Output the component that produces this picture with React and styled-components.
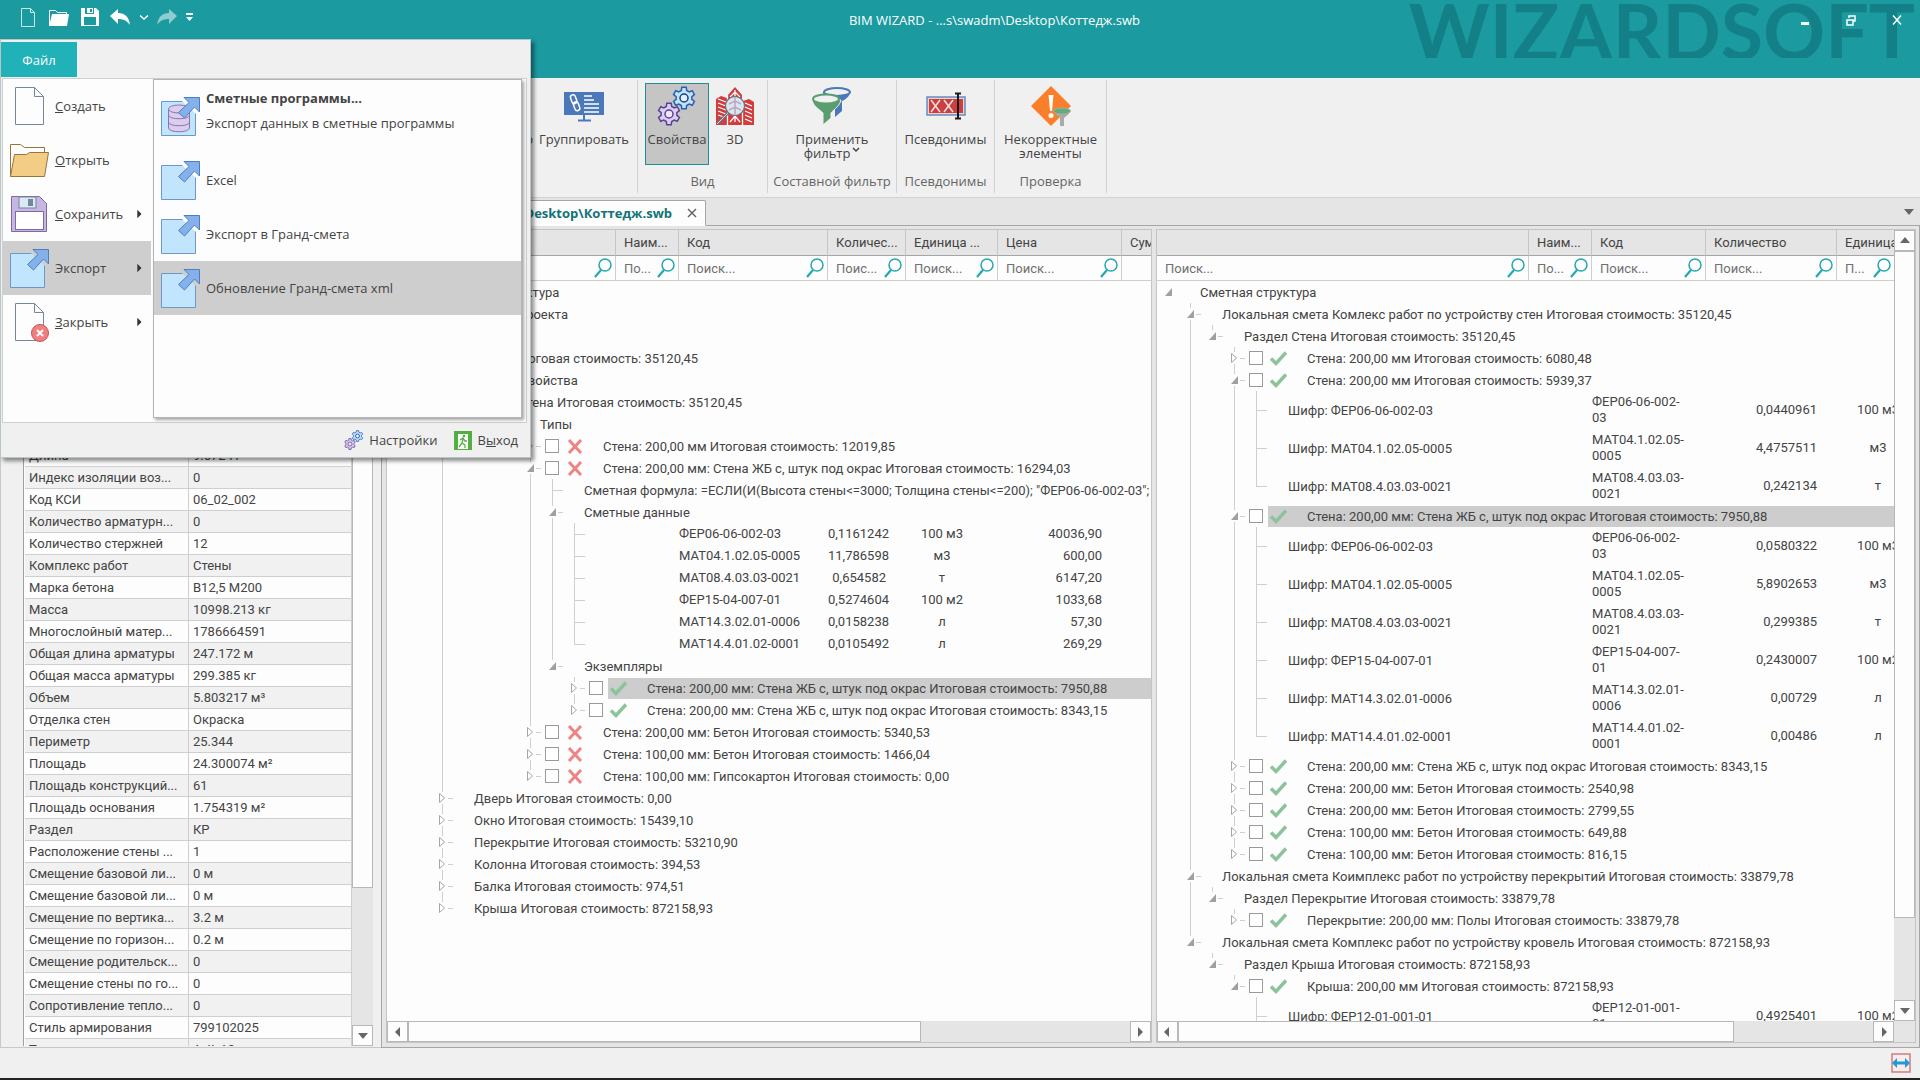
import React, { useState } from "react";
import styled, { createGlobalStyle, css } from "styled-components";

const GlobalStyle = createGlobalStyle`
  * {
    box-sizing: border-box;
  }

  body {
    margin: 0;
    background: #222;
    color: #444;
    font-family: "Open Sans", "Noto Sans", sans-serif;
    font-size: 13px;
  }

  button,
  input {
    font: inherit;
    color: inherit;
  }

  button {
    padding: 0;
    border: none;
    background: none;
    cursor: pointer;
  }

  svg {
    display: block;
    flex: none;
  }
`;

/* ---------- layout ---------- */

const Window = styled.div`
  position: relative;
  display: flex;
  flex-direction: column;
  height: 100vh;
  border-bottom: 2px solid #222;
  background: #f0f0f0;
  overflow: hidden;
`;

const Workspace = styled.div`
  display: flex;
  flex: 1;
  min-height: 0;
`;

const Documents = styled.main`
  display: flex;
  flex-direction: column;
  flex: 1;
  min-width: 0;
  background: #e5e5e5;
`;

const Panes = styled.div`
  display: flex;
  flex: 1;
  gap: 4px;
  min-height: 0;
  padding: 3px 3px 4px 4px;
  border: solid #a6a6a6;
  border-width: 0 1px 1px 1px;
`;

const StatusBar = styled.footer`
  display: flex;
  flex: none;
  align-items: center;
  justify-content: flex-end;
  height: 30px;
  padding-right: 9px;
  background: #f0f0f0;
`;

/* ---------- title bar ---------- */

const TitleBar = styled.header`
  position: relative;
  display: flex;
  flex: none;
  align-items: flex-start;
  height: 78px;
  background: #1b9aa0;
  color: #fff;
  overflow: hidden;
`;

const QuickAccess = styled.div`
  display: flex;
  align-items: center;
  width: 195px;
  height: 34px;
  padding-left: 18px;
`;

const QuickButton = styled.button`
  display: flex;
  align-items: center;
  justify-content: center;
  width: ${(props) => props.$width || 30}px;
  height: 24px;
  opacity: ${(props) => (props.$faded ? 0.5 : 1)};
`;

const Title = styled.h1`
  flex: 1;
  margin: 0;
  padding-left: 12px;
  font-size: 13px;
  font-weight: 400;
  line-height: 40px;
  text-align: center;
`;

const Brand = styled.div`
  position: absolute;
  top: 0;
  right: 5px;
  height: 58px;
  overflow: hidden;
  color: #138088;
  font-family: Lato, sans-serif;
  font-size: 77px;
  font-weight: 700;
  line-height: 60px;
`;

const WindowButtons = styled.div`
  position: relative;
  display: flex;
  width: 138px;
  height: 40px;
`;

const WindowButton = styled.button`
  display: flex;
  flex: 1;
  align-items: center;
  justify-content: center;
`;

/* ---------- ribbon ---------- */

const Ribbon = styled.nav`
  display: flex;
  flex: none;
  height: 120px;
  padding: 2px 0 4px;
  border-bottom: 1px solid #d2d2d2;
  background: #f0f0f0;
`;

const RibbonGroup = styled.section`
  display: flex;
  flex-direction: column;
  width: ${(props) => props.$width}px;
  border-right: 1px solid #d2d2d2;
`;

const RibbonButtons = styled.div`
  display: flex;
  flex: 1;
  justify-content: ${(props) => props.$align || "center"};
  padding: 3px 7px 0;
`;

const RibbonButton = styled.button`
  display: flex;
  flex: none;
  flex-direction: column;
  align-items: center;
  width: ${(props) => props.$width || 52}px;
  height: 82px;
  padding-top: 2px;
  border: 1px solid ${(props) => (props.$active ? "#1b8f95" : "transparent")};
  background: ${(props) => (props.$active ? "#c5c5c5" : "none")};
  line-height: 14px;
  white-space: nowrap;

  span {
    display: flex;
    align-items: center;
    gap: 2px;
  }

  svg:first-child {
    margin-bottom: 6px;
  }
`;

const RibbonCaption = styled.h2`
  height: 24px;
  margin: 0;
  color: #666;
  font-size: 13px;
  font-weight: 400;
  line-height: 24px;
  text-align: center;
  white-space: nowrap;
`;

/* ---------- application menu ---------- */

const AppMenu = styled.div`
  position: absolute;
  top: 39px;
  left: 0;
  z-index: 10;
  width: 531px;
  border: 1px solid #b9c6c7;
  background: #f0f0f0;
  box-shadow: 3px 3px 4px rgba(0, 0, 0, 0.45);
`;

const FileTab = styled.button`
  display: block;
  width: 76px;
  height: 35px;
  margin-top: 2px;
  background: #20b2b8;
  color: #fff;
`;

const MenuBody = styled.div`
  display: flex;
  margin: 1px 3px 0 1px;
  border: 1px solid #d0d0d0;
  background: #fdfdfd;
`;

const MenuList = styled.ul`
  width: 150px;
  height: 343px;
  margin: 0;
  padding: 0 2px 0 0;
  list-style: none;
`;

const Submenu = styled.ul`
  flex: 1;
  height: 339px;
  margin: 0 4px 0 0;
  padding: 0;
  border: 1px solid #b4b4b4;
  background: #fdfdfd;
  box-shadow: 2px 2px 3px rgba(0, 0, 0, 0.35);
  list-style: none;
`;

const MenuItem = styled.button`
  display: flex;
  align-items: center;
  gap: 5px;
  width: 100%;
  height: ${(props) => (props.$tall ? 73 : 54)}px;
  padding: 0 7px 0 6px;
  background: ${(props) => (props.$active ? "#cecece" : "none")};
  text-align: left;

  b,
  small {
    display: block;
    font-size: 13px;
    line-height: 25px;
  }
`;

const MenuText = styled.span`
  flex: 1;
  padding-bottom: ${(props) => (props.$raised ? 12 : 0)}px;
`;

const MenuFooter = styled.div`
  display: flex;
  justify-content: flex-end;
  gap: 17px;
  height: 34px;
  padding-right: 12px;
`;

const FooterButton = styled.button`
  display: flex;
  align-items: center;
  gap: 5px;
`;

/* ---------- properties ---------- */

const PropertiesPanel = styled.aside`
  display: flex;
  flex: none;
  width: 381px;
  padding: 1px 8px 1px 22px;
  border-left: 1px solid #c8c8c8;
  border-bottom: 1px solid #c8c8c8;
`;

const PropertiesScroll = styled.div`
  flex: 1;
  min-width: 0;
  padding-left: 1px;
  border-left: 1px solid #a0a0a0;
  background: #fdfdfd;
  overflow: hidden;
`;

const PropertiesTable = styled.table`
  width: 100%;
  border-collapse: separate;
  border-spacing: 0;
  table-layout: fixed;
  font-family: Roboto, sans-serif;

  caption {
    height: 26px;
    text-align: left;
  }

  tr {
    background: #fdfdfd;
  }

  tr:nth-child(even) {
    background: #f1f1f1;
  }

  th,
  td {
    height: 22px;
    padding: 0 4px;
    border-right: 1px solid #cfcfcf;
    border-bottom: 1px solid #cfcfcf;
    overflow: hidden;
    font-weight: 400;
    text-align: left;
    text-overflow: ellipsis;
    white-space: nowrap;
  }

  th {
    width: 164px;
  }
`;

/* ---------- tabs ---------- */

const TabStrip = styled.div`
  display: flex;
  flex: none;
  align-items: flex-end;
  justify-content: space-between;
  height: 28px;
  border-bottom: 1px solid #a6a6a6;
`;

const DocumentTab = styled.div`
  display: flex;
  align-items: center;
  justify-content: flex-end;
  gap: 15px;
  width: 325px;
  height: 26px;
  margin-bottom: -1px;
  padding-right: 8px;
  border: 1px solid #a6a6a6;
  border-bottom-color: #fdfdfd;
  border-radius: 2px 2px 0 0;
  background: #fdfdfd;
  color: #127378;
  font-weight: 700;
`;

const TabList = styled.button`
  width: 22px;
  height: 26px;
  display: flex;
  align-items: center;
  justify-content: center;
`;

/* ---------- tree grid ---------- */

const Pane = styled.section`
  display: flex;
  flex: ${(props) => props.$grow} 1 0;
  min-width: 0;
  border: 1px solid #c4c4c4;
  background: #fdfdfd;
`;

const PaneMain = styled.div`
  display: flex;
  flex: 1;
  flex-direction: column;
  min-width: 0;
`;

const PaneScroll = styled.div`
  flex: 1;
  min-height: 0;
  overflow: hidden;
`;

const GridTable = styled.table`
  width: 100%;
  border-collapse: separate;
  border-spacing: 0;
  table-layout: fixed;
  font-family: Roboto, sans-serif;
`;

const HeadCell = styled.th`
  height: 26px;
  padding: 0 0 0 8px;
  border-right: 1px solid #c6c6c6;
  border-bottom: 1px solid #a6a6a6;
  background: #e5e5e5;
  overflow: hidden;
  font-weight: 400;
  text-align: left;
  text-overflow: clip;
  white-space: nowrap;

  &:last-child {
    border-right: none;
  }
`;

const SearchCell = styled.td`
  height: 25px;
  padding: 0 3px 0 8px;
  border-right: 1px solid #cfcfcf;
  border-bottom: 1px solid #cfcfcf;

  &:last-child {
    border-right: none;
  }
`;

const SearchBox = styled.label`
  display: flex;
  align-items: center;
  gap: 4px;
`;

const SearchInput = styled.input`
  flex: 1;
  min-width: 0;
  width: 0;
  padding: 0;
  border: none;
  outline: none;
  background: none;
  text-overflow: ellipsis;

  &::placeholder {
    color: #707070;
    opacity: 1;
  }
`;

const TreeCell = styled.td`
  padding: 0;
  white-space: nowrap;
`;

const TreeLine = styled.div`
  display: flex;
  align-items: stretch;
  height: ${(props) => (props.$tall ? 38 : 22)}px;
`;

const vertical = css`
  background-image: linear-gradient(#cfcfcf, #cfcfcf);
  background-repeat: no-repeat;
  background-position: 11px 0;
`;

const Guide = styled.span`
  flex: none;
  width: 22px;
  ${(props) => props.$on && vertical}
  background-size: 1px 100%;
`;

const Joint = styled.span`
  display: flex;
  flex: none;
  align-items: center;
  width: 22px;
  ${(props) => !props.$root && vertical}
  background-size: 1px ${(props) => (props.$last ? "50%" : "100%")};

  &::after {
    content: "";
    flex: 1;
    height: 1px;
    margin-left: ${(props) => (props.$leaf ? 11 : 0)}px;
    background: ${(props) => (props.$root ? "none" : "#cfcfcf")};
  }
`;

const Expander = styled.button`
  display: flex;
  align-items: center;
  justify-content: center;
  width: 9px;
  height: 12px;
  margin: 0 1px 0 7px;
  background: #fdfdfd;
`;

const Tick = styled.input`
  appearance: none;
  align-self: center;
  flex: none;
  width: 14px;
  height: 14px;
  margin: 0 5px 0 4px;
  border: 1px solid #9a9a9a;
  background: #fff;
`;

const Label = styled.span`
  display: flex;
  flex: 1;
  align-items: center;
  margin-top: 1px;
  padding-left: ${(props) => (props.$marked ? 2 : 21)}px;
  background: ${(props) => (props.$selected ? "#cdcdcd" : "none")};
  line-height: 20px;

  svg {
    margin-right: 20px;
  }
`;

const DataCell = styled.td`
  padding: 0 20px 0 0;
  line-height: 16px;
  text-align: ${(props) => props.$align || "left"};
  white-space: ${(props) => (props.$wrap ? "normal" : "nowrap")};
`;

const Unit = styled.div`
  width: ${(props) => props.$width}px;
  text-align: center;
`;

/* ---------- scroll bars ---------- */

const ScrollColumn = styled.div`
  display: flex;
  flex: none;
  flex-direction: column;
  width: 21px;
  background: #e5e5e5;
`;

const ScrollRow = styled.div`
  display: flex;
  flex: none;
  height: 21px;
  background: #e5e5e5;
`;

const ScrollButton = styled.button`
  display: flex;
  flex: none;
  align-items: center;
  justify-content: center;
  width: 21px;
  height: 21px;
  border: 1px solid #b8b8b8;
  background: #fdfdfd;
`;

const ScrollTrack = styled.div`
  display: flex;
  flex: 1;
  flex-direction: ${(props) => (props.$vertical ? "column" : "row")};
`;

const ScrollThumb = styled.div`
  flex: 0 0 ${(props) => props.$size}%;
  border: 1px solid #b8b8b8;
  background: #fdfdfd;
`;

/* ---------- icons ---------- */

const arrows = {
  up: "M1 8 L6 2 L11 8 Z",
  down: "M1 3 L11 3 L6 9 Z",
  left: "M8 1 L8 11 L3 6 Z",
  right: "M4 1 L4 11 L9 6 Z",
};

const Arrow = ({ to, size = 12, color = "#666" }) => (
  <svg width={size} height={size} viewBox="0 0 12 12">
    <path d={arrows[to]} fill={color} />
  </svg>
);

const gearPath = (cx, cy, outer, inner) => {
  const points = [];
  for (let i = 0; i < 6; i++) {
    [
      [-0.34, inner],
      [-0.2, outer],
      [0.2, outer],
      [0.34, inner],
    ].forEach(([offset, r]) => {
      const a = (i * Math.PI) / 3 + offset;
      points.push(
        `${(cx + r * Math.sin(a)).toFixed(2)} ${(cy - r * Math.cos(a)).toFixed(2)}`
      );
    });
  }
  return `M${points.join("L")}Z`;
};

const GearsIcon = ({ size = 40 }) => (
  <svg width={size} height={size} viewBox="0 0 40 40">
    <path d={gearPath(27, 12, 11, 8)} fill="#bfe3ff" stroke="#2a5fae" strokeWidth="1.5" />
    <circle cx="27" cy="12" r="4" fill="#dff0ff" stroke="#1f3f7c" strokeWidth="1.5" />
    <path d={gearPath(12, 28, 11, 8)} fill="#dccdf2" stroke="#5b4390" strokeWidth="1.5" />
    <circle cx="12" cy="28" r="4" fill="#eee6fa" stroke="#5b4390" strokeWidth="1.5" />
  </svg>
);

const GroupIcon = () => (
  <svg width="40" height="40" viewBox="0 0 40 40">
    <rect x="0" y="6" width="40" height="23" fill="#4a78b8" />
    <path d="M20 29v5M14 34.500h13" stroke="#4a78b8" strokeWidth="2" />
    <path d="M20 10h8M20 14h10M20 18h15M20 22h15M20 26h15" stroke="#fff" strokeWidth="1.5" />
    <g fill="none" stroke="#fff" strokeWidth="1.5">
      <rect x="7" y="9" width="5" height="9" rx="2.500" transform="rotate(-20 9 13)" />
      <rect x="10" y="16" width="5" height="9" rx="2.500" transform="rotate(-20 12 20)" />
    </g>
  </svg>
);

const BuildingIcon = () => (
  <svg width="40" height="40" viewBox="0 0 40 40">
    <path d="M13 39V9l7-8 7 8v30z" fill="#d23c3c" />
    <path d="M1 39V13l5-3 6 2v27zM39 39V16l-5-3-6 2v24z" fill="#d23c3c" />
    <path
      d="M20 4v32M15 11l5-5 5 5M12.500 9v30M27.500 12v27M15 36l5-6 5 6M3 13l8 3M3 17l8 3M3 21l8 3M3 25l8 3M3 29l6 2M30 17l7 3M30 21l7 3M30 25l7 3M30 29l7 3M30 33l7 3"
      fill="none"
      stroke="#fff"
      strokeWidth="1.300"
    />
    <path d="M13 27L2 38" stroke="#6d7480" strokeWidth="3" />
    <path d="M13 27L2 38" stroke="#c9d2dd" strokeWidth="1" />
    <circle cx="20" cy="20" r="9.500" fill="#dce6f2" stroke="#6d7480" strokeWidth="1.200" />
    <path d="M20 11v18M14 18l6-3 6 3M14 24l6-3 6 3" fill="none" stroke="#b9a9b9" strokeWidth="1.500" />
  </svg>
);

const FilterIcon = () => (
  <svg width="40" height="40" viewBox="0 0 40 40">
    <path d="M11 6c0 4 5 6 12 7v18l7-6V15c5-2 8-6 8-9z" fill="#4a78b8" />
    <ellipse cx="25" cy="6" rx="13" ry="4" fill="#f0f0f0" stroke="#4a78b8" strokeWidth="2" />
    <path d="M0 14c1 6 7 9 11 13v12l8-7v-5c3-4 9-7 10-13z" fill="#5a9e70" stroke="#f0f0f0" strokeWidth="1" />
    <ellipse cx="14" cy="13" rx="13" ry="4.500" fill="#f0f0f0" stroke="#5a9e70" strokeWidth="2" />
  </svg>
);

const AliasIcon = () => (
  <svg width="40" height="40" viewBox="0 0 40 40">
    <rect x="1" y="11" width="38" height="18" fill="#f3cfd0" stroke="#5f8fc4" strokeWidth="1.500" />
    <rect x="3" y="13" width="34" height="14" fill="#c84040" />
    <path d="M5 14l9 12M14 14L5 26M18 14l9 12M27 14l-9 12" stroke="#f8dede" strokeWidth="1.500" />
    <path d="M32 8v24M29 7.500h6M29 32.500h6" stroke="#1a1a1a" strokeWidth="2" />
  </svg>
);

const WarningIcon = () => (
  <svg width="40" height="40" viewBox="0 0 40 40">
    <path d="M20 0l20 20-20 20L0 20z" fill="#fb7f2a" />
    <path d="M17.500 9h5l-1.500 16h-2z" fill="#fff" />
    <circle cx="20" cy="29.500" r="2.500" fill="#fff" />
    <path d="M23 25c1 4 5 5 6 7v8h4v-8c2-2 5-3 6-7z" fill="#a9a9a9" />
    <ellipse cx="31" cy="25" rx="8.500" ry="3" fill="#5fae78" stroke="#a9a9a9" />
  </svg>
);

const PageIcon = ({ closed }) => (
  <svg width="41" height="41" viewBox="0 0 41 41">
    <path d="M6.500 1.500h19l9 9v28h-28z" fill="#fdfdfd" stroke="#75879a" />
    <path d="M25.500 1.500v9h9" fill="none" stroke="#75879a" />
    {closed && (
      <>
        <circle cx="31" cy="31" r="8.500" fill="#f08080" stroke="#c05656" />
        <path d="M28 28l6 6M34 28l-6 6" stroke="#fff" strokeWidth="2" />
      </>
    )}
  </svg>
);

const FolderIcon = () => (
  <svg width="41" height="41" viewBox="0 0 41 41">
    <path d="M1.500 36.500v-32h10l4 3h20v6" fill="#fdfdfd" stroke="#96763b" />
    <path d="M1.500 36.500l4-22h12l3-2h19l-4 24z" fill="#f3cd86" stroke="#96763b" />
  </svg>
);

const DiskIcon = () => (
  <svg width="41" height="41" viewBox="0 0 41 41">
    <path d="M2.500 2.500h28l7 7v28h-35z" fill="#c5b7e2" stroke="#7c6aa3" />
    <rect x="10" y="3" width="17" height="11" fill="#dce8f2" stroke="#75879a" />
    <rect x="19" y="5" width="5" height="7" fill="#75879a" />
    <rect x="6.500" y="17.500" width="28" height="18" fill="#fff" stroke="#7c6aa3" />
  </svg>
);

const ExportIcon = ({ database }) => (
  <svg width="41" height="41" viewBox="0 0 41 41">
    <path d="M22.500 5.500h-21v34h34v-22" fill="#c1e5fd" />
    <path d="M22.500 5.500h-21v34h34v-22" fill="none" stroke="#6c97c6" />
    {database && (
      <g fill="#dccdec" stroke="#8a76b0">
        <path d="M8.500 13v19c0 5 21 5 21 0V13" />
        <ellipse cx="19" cy="13" rx="10.500" ry="4" />
        <path d="M8.500 19c0 5 21 5 21 0M8.500 26c0 5 21 5 21 0" fill="none" />
      </g>
    )}
    <path d="M24 1.500h15.500V16l-5-5-10 11-6-5.500L29 6.500z" fill="#84b1ec" stroke="#4d7fc0" />
  </svg>
);

const ExitIcon = () => (
  <svg width="18" height="19" viewBox="0 0 18 19">
    <rect width="18" height="19" fill="#52b043" />
    <rect x="4" y="3" width="10" height="15" fill="#fff" />
    <circle cx="10" cy="5" r="1.300" fill="#52b043" />
    <path d="M6 9l3-2 2 3h2M9 8l-1 4 3 2v3M8 12l-3 4" fill="none" stroke="#52b043" strokeWidth="1.300" />
  </svg>
);

const SearchIcon = () => (
  <svg width="18" height="20" viewBox="0 0 18 20">
    <circle cx="11" cy="7" r="6" fill="none" stroke="#25a8ae" strokeWidth="1.500" />
    <path d="M7 12L1 19" stroke="#25a8ae" strokeWidth="2.200" />
  </svg>
);

const CheckIcon = () => (
  <svg width="17" height="16" viewBox="0 0 17 16">
    <path d="M1 7.500l5 5L16 1.500" fill="none" stroke="#8cc49a" strokeWidth="3.500" />
  </svg>
);

const CrossIcon = () => (
  <svg width="17" height="16" viewBox="0 0 17 16">
    <path d="M3 1l12 13M15 1L3 14" fill="none" stroke="#ee8585" strokeWidth="3" />
  </svg>
);

const FitIcon = () => (
  <svg width="20" height="20" viewBox="0 0 20 20">
    <rect x="1" y="1" width="18" height="18" fill="#f6ecec" stroke="#cf7d7d" strokeWidth="1.500" />
    <path d="M1 10l5-5v3.500h8V5l5 5-5 5v-3.500H6V15z" fill="#1f9ad6" />
  </svg>
);

/* ---------- data ---------- */

const properties = [
  ["Базовая линия", "0"],
  ["Верхняя зависимость", "Этаж 2"],
  ["Высота стены", "3000"],
  ["Группа модели", "КР"],
  ["Дата изменения", "0"],
  ["Диаметр арматуры", "12"],
  ["Длина арматуры", "247.172 м"],
  ["Длина выпуска", "0"],
  ["Длина по оси", "9.67241"],
  ["Длина проекции", "9.67241"],
  ["Длина", "9.67241"],
  ["Индекс изоляции воз...", "0"],
  ["Код КСИ", "06_02_002"],
  ["Количество арматурн...", "0"],
  ["Количество стержней", "12"],
  ["Комплекс работ", "Стены"],
  ["Марка бетона", "В12,5 М200"],
  ["Масса", "10998.213 кг"],
  ["Многослойный матер...", "1786664591"],
  ["Общая длина арматуры", "247.172 м"],
  ["Общая масса арматуры", "299.385 кг"],
  ["Объем", "5.803217 м³"],
  ["Отделка стен", "Окраска"],
  ["Периметр", "25.344"],
  ["Площадь", "24.300074 м²"],
  ["Площадь конструкций...", "61"],
  ["Площадь основания", "1.754319 м²"],
  ["Раздел", "КР"],
  ["Расположение стены ...", "1"],
  ["Смещение базовой ли...", "0 м"],
  ["Смещение базовой ли...", "0 м"],
  ["Смещение по вертика...", "3.2 м"],
  ["Смещение по горизон...", "0.2 м"],
  ["Смещение родительск...", "0"],
  ["Смещение стены по го...", "0"],
  ["Сопротивление тепло...", "0"],
  ["Стиль армирования", "799102025"],
  ["Тип", "A_II_12"],
];

const projectTree = [
  {
    text: "Проектная структура",
    children: [
      {
        text: "Элементы проекта",
        children: [
          { text: "Сваи", children: [] },
          {
            text: "Стена Итоговая стоимость: 35120,45",
            children: [
              {
                text: "Все свойства",
                children: [],
              },
              {
                text: "Стена Итоговая стоимость: 35120,45",
                level: 4,
                children: [
                  {
                    text: "Типы",
                    children: [
                      { text: "Стена: 200,00 мм Итоговая стоимость: 12019,85", mark: "no" },
                      {
                        text: "Стена: 200,00 мм: Стена ЖБ с, штук под окрас Итоговая стоимость: 16294,03",
                        mark: "no",
                        children: [
                          {
                            text: 'Сметная формула: =ЕСЛИ(И(Высота стены<=3000; Толщина стены<=200); "ФЕР06-06-002-03"; "ФЕР06-06-002-04")',
                            leaf: true,
                          },
                          {
                            text: "Сметные данные",
                            children: [
                              { cells: ["ФЕР06-06-002-03", "0,1161242", "100 м3", "40036,90"] },
                              { cells: ["МАТ04.1.02.05-0005", "11,786598", "м3", "600,00"] },
                              { cells: ["МАТ08.4.03.03-0021", "0,654582", "т", "6147,20"] },
                              { cells: ["ФЕР15-04-007-01", "0,5274604", "100 м2", "1033,68"] },
                              { cells: ["МАТ14.3.02.01-0006", "0,0158238", "л", "57,30"] },
                              { cells: ["МАТ14.4.01.02-0001", "0,0105492", "л", "269,29"] },
                            ],
                          },
                          {
                            text: "Экземпляры",
                            children: [
                              {
                                text: "Стена: 200,00 мм: Стена ЖБ с, штук под окрас Итоговая стоимость: 7950,88",
                                mark: "ok",
                                selected: true,
                              },
                              {
                                text: "Стена: 200,00 мм: Стена ЖБ с, штук под окрас Итоговая стоимость: 8343,15",
                                mark: "ok",
                              },
                            ],
                          },
                        ],
                      },
                      { text: "Стена: 200,00 мм: Бетон Итоговая стоимость: 5340,53", mark: "no" },
                      { text: "Стена: 100,00 мм: Бетон Итоговая стоимость: 1466,04", mark: "no" },
                      { text: "Стена: 100,00 мм: Гипсокартон Итоговая стоимость: 0,00", mark: "no" },
                    ],
                  },
                ],
              },
            ],
          },
          { text: "Дверь Итоговая стоимость: 0,00" },
          { text: "Окно Итоговая стоимость: 15439,10" },
          { text: "Перекрытие Итоговая стоимость: 53210,90" },
          { text: "Колонна Итоговая стоимость: 394,53" },
          { text: "Балка Итоговая стоимость: 974,51" },
          { text: "Крыша Итоговая стоимость: 872158,93" },
        ],
      },
    ],
  },
];

const code = (name, amount, unit) => ({ text: `Шифр: ${name}`, cells: [name, amount, unit] });

const estimateTree = [
  {
    text: "Сметная структура",
    children: [
      {
        text: "Локальная смета Комлекс работ по устройству стен Итоговая стоимость: 35120,45",
        children: [
          {
            text: "Раздел Стена Итоговая стоимость: 35120,45",
            children: [
              { text: "Стена: 200,00 мм Итоговая стоимость: 6080,48", mark: "ok" },
              {
                text: "Стена: 200,00 мм Итоговая стоимость: 5939,37",
                mark: "ok",
                children: [
                  code("ФЕР06-06-002-03", "0,0440961", "100 м3"),
                  code("МАТ04.1.02.05-0005", "4,4757511", "м3"),
                  code("МАТ08.4.03.03-0021", "0,242134", "т"),
                ],
              },
              {
                text: "Стена: 200,00 мм: Стена ЖБ с, штук под окрас Итоговая стоимость: 7950,88",
                mark: "ok",
                selected: true,
                children: [
                  code("ФЕР06-06-002-03", "0,0580322", "100 м3"),
                  code("МАТ04.1.02.05-0005", "5,8902653", "м3"),
                  code("МАТ08.4.03.03-0021", "0,299385", "т"),
                  code("ФЕР15-04-007-01", "0,2430007", "100 м2"),
                  code("МАТ14.3.02.01-0006", "0,00729", "л"),
                  code("МАТ14.4.01.02-0001", "0,00486", "л"),
                ],
              },
              {
                text: "Стена: 200,00 мм: Стена ЖБ с, штук под окрас Итоговая стоимость: 8343,15",
                mark: "ok",
              },
              { text: "Стена: 200,00 мм: Бетон Итоговая стоимость: 2540,98", mark: "ok" },
              { text: "Стена: 200,00 мм: Бетон Итоговая стоимость: 2799,55", mark: "ok" },
              { text: "Стена: 100,00 мм: Бетон Итоговая стоимость: 649,88", mark: "ok" },
              { text: "Стена: 100,00 мм: Бетон Итоговая стоимость: 816,15", mark: "ok" },
            ],
          },
        ],
      },
      {
        text: "Локальная смета Коимплекс работ по устройству перекрытий Итоговая стоимость: 33879,78",
        children: [
          {
            text: "Раздел Перекрытие Итоговая стоимость: 33879,78",
            children: [
              { text: "Перекрытие: 200,00 мм: Полы Итоговая стоимость: 33879,78", mark: "ok" },
            ],
          },
        ],
      },
      {
        text: "Локальная смета Комплекс работ по устройству кровель Итоговая стоимость: 872158,93",
        children: [
          {
            text: "Раздел Крыша Итоговая стоимость: 872158,93",
            children: [
              {
                text: "Крыша: 200,00 мм Итоговая стоимость: 872158,93",
                mark: "ok",
                children: [
                  code("ФЕР12-01-001-01", "0,4925401", "100 м2"),
                  code("ФЕР12-01-013-03", "0,4925401", "100 м2"),
                ],
              },
            ],
          },
        ],
      },
    ],
  },
];

const projectColumns = [
  { title: "", width: 229 },
  { title: "Наим...", width: 63, hint: "По..." },
  { title: "Код", width: 149 },
  { title: "Количес...", width: 78, hint: "Поис..." },
  { title: "Единица ...", width: 92 },
  { title: "Цена", width: 124 },
  { title: "Сумма", noSearch: true },
];

const estimateColumns = [
  { title: "" },
  { title: "Наим...", width: 63, hint: "По..." },
  { title: "Код", width: 114 },
  { title: "Количество", width: 131 },
  { title: "Единица", width: 57, hint: "П..." },
];

/* ---------- components ---------- */

// flattens the tree; guides[i] tells whether the ancestor on level i has a next sibling
const flatten = (nodes, guides = [], out = []) => {
  nodes.forEach((node, i) => {
    const last = i === nodes.length - 1;
    const indent =
      node.level === undefined ? guides : guides.concat(Array(node.level - guides.length).fill(false));
    out.push({ ...node, guides: indent, last, root: indent.length === 0 });
    if (node.children) {
      flatten(node.children, [...indent, indent.length > 0 && !last], out);
    }
  });
  return out;
};

const TreeRow = ({ node, columns, tall }) => {
  const [checked, setChecked] = useState(false);
  const leaf = node.leaf || Boolean(node.cells);
  const line = (
    <TreeLine $tall={tall && node.cells}>
      {node.guides.map((on, i) => (
        <Guide key={i} $on={on} />
      ))}
      <Joint $root={node.root} $last={node.last} $leaf={leaf}>
        {!leaf && (
          <Expander aria-label={node.children ? "Свернуть" : "Развернуть"}>
            <svg width="9" height="10" viewBox="0 0 9 10">
              {node.children ? (
                <path d="M8 1v8H1z" fill="#a0a0a0" />
              ) : (
                <path d="M1.500 .5v9l5-4.500z" fill="#fff" stroke="#a6a6a6" />
              )}
            </svg>
          </Expander>
        )}
      </Joint>
      {node.mark && (
        <Tick
          type="checkbox"
          aria-label={node.text}
          checked={checked}
          onChange={(e) => setChecked(e.target.checked)}
        />
      )}
      <Label $marked={node.mark} $selected={node.selected}>
        {node.mark === "ok" && <CheckIcon />}
        {node.mark === "no" && <CrossIcon />}
        {node.text}
      </Label>
    </TreeLine>
  );

  if (!node.cells) {
    return (
      <tr>
        <TreeCell colSpan={columns.length}>{line}</TreeCell>
      </tr>
    );
  }

  const [name, amount, unit, price] = node.cells;
  return (
    <tr>
      <TreeCell colSpan={2}>{line}</TreeCell>
      <DataCell $wrap={tall}>{name}</DataCell>
      <DataCell $align="right">{amount}</DataCell>
      <DataCell>
        <Unit $width={tall ? 82 : 72}>{unit}</Unit>
      </DataCell>
      {price && <DataCell $align="right">{price}</DataCell>}
    </tr>
  );
};

const HorizontalScroll = ({ size }) => (
  <ScrollRow>
    <ScrollButton aria-label="Влево">
      <Arrow to="left" />
    </ScrollButton>
    <ScrollTrack>
      <ScrollThumb $size={size} />
    </ScrollTrack>
    <ScrollButton aria-label="Вправо">
      <Arrow to="right" />
    </ScrollButton>
  </ScrollRow>
);

const TreeGrid = ({ columns, nodes, tall, scroll }) => (
  <PaneMain>
    <PaneScroll>
      <GridTable>
        <colgroup>
          {columns.map((column, i) => (
            <col key={i} width={column.width} />
          ))}
        </colgroup>
        <thead>
          <tr>
            {columns.map((column, i) => (
              <HeadCell key={i}>{column.title}</HeadCell>
            ))}
          </tr>
        </thead>
        <tbody>
          <tr>
            {columns.map((column, i) => (
              <SearchCell key={i}>
                {!column.noSearch && (
                  <SearchBox>
                    <SearchInput
                      type="text"
                      placeholder={column.hint || "Поиск..."}
                      aria-label={`Поиск ${column.title}`}
                    />
                    <SearchIcon />
                  </SearchBox>
                )}
              </SearchCell>
            ))}
          </tr>
          {flatten(nodes).map((node, i) => (
            <TreeRow key={i} node={node} columns={columns} tall={tall} />
          ))}
        </tbody>
      </GridTable>
    </PaneScroll>
    <HorizontalScroll size={scroll} />
  </PaneMain>
);

const Menu = () => (
  <AppMenu>
    <FileTab>Файл</FileTab>
    <MenuBody>
      <MenuList>
        <li>
          <MenuItem>
            <PageIcon />
            <MenuText><u>С</u>оздать</MenuText>
          </MenuItem>
        </li>
        <li>
          <MenuItem>
            <FolderIcon />
            <MenuText><u>О</u>ткрыть</MenuText>
          </MenuItem>
        </li>
        <li>
          <MenuItem>
            <DiskIcon />
            <MenuText><u>С</u>охранить</MenuText>
            <Arrow to="right" size={10} color="#333" />
          </MenuItem>
        </li>
        <li>
          <MenuItem $active>
            <ExportIcon />
            <MenuText>Экспорт</MenuText>
            <Arrow to="right" size={10} color="#333" />
          </MenuItem>
        </li>
        <li>
          <MenuItem>
            <PageIcon closed />
            <MenuText><u>З</u>акрыть</MenuText>
            <Arrow to="right" size={10} color="#333" />
          </MenuItem>
        </li>
      </MenuList>
      <Submenu>
        <li>
          <MenuItem $tall>
            <ExportIcon database />
            <MenuText $raised>
              <b>Сметные программы...</b>
              <small>Экспорт данных в сметные программы</small>
            </MenuText>
          </MenuItem>
        </li>
        <li>
          <MenuItem>
            <ExportIcon />
            <MenuText>Excel</MenuText>
          </MenuItem>
        </li>
        <li>
          <MenuItem>
            <ExportIcon />
            <MenuText>Экспорт в Гранд-смета</MenuText>
          </MenuItem>
        </li>
        <li>
          <MenuItem $active>
            <ExportIcon />
            <MenuText>Обновление Гранд-смета xml</MenuText>
          </MenuItem>
        </li>
      </Submenu>
    </MenuBody>
    <MenuFooter>
      <FooterButton>
        <GearsIcon size={20} />
        Настройки
      </FooterButton>
      <FooterButton>
        <ExitIcon />
        <span>В<u>ы</u>ход</span>
      </FooterButton>
    </MenuFooter>
  </AppMenu>
);

const App = () => {
  return (
    <Window>
      <GlobalStyle />
      <TitleBar>
        <Brand>WIZARDSOFT</Brand>
        <QuickAccess>
          <QuickButton aria-label="Создать" $width={20}>
            <svg width="14" height="19" viewBox="0 0 14 19">
              <path d="M.5.500h9l4 4v14H.5zM9.500.500v4h4" fill="none" stroke="#c8e8ea" />
            </svg>
          </QuickButton>
          <QuickButton aria-label="Открыть" $width={42}>
            <svg width="20" height="17" viewBox="0 0 20 17">
              <path d="M.5 16V1.500h6l2 2h9V6" fill="none" stroke="#fff" />
              <path d="M3 5h17l-2 12H0z" fill="#fff" />
            </svg>
          </QuickButton>
          <QuickButton aria-label="Сохранить" $width={20}>
            <svg width="18" height="18" viewBox="0 0 18 18">
              <path d="M0 0h15l3 3v15H0z" fill="#fff" />
              <path d="M4 0h9v6H4zM3 9h12v8H3z" fill="#1b9aa0" />
              <path d="M6 0h6v5H6z" fill="#fff" />
              <path d="M9 1h2v3H9z" fill="#1b9aa0" />
            </svg>
          </QuickButton>
          <QuickButton aria-label="Отменить" $width={40}>
            <svg width="20" height="16" viewBox="0 0 20 16">
              <path d="M8 0v4c7 0 11 4 12 12-3-4-6-6-12-6v5L0 7z" fill="#fff" />
            </svg>
          </QuickButton>
          <QuickButton aria-label="История" $width={8}>
            <svg width="8" height="5" viewBox="0 0 8 5">
              <path d="M0 .5l4 3.500L8 .5" fill="none" stroke="#fff" strokeWidth="1.500" />
            </svg>
          </QuickButton>
          <QuickButton aria-label="Вернуть" $width={38} $faded>
            <svg width="20" height="16" viewBox="0 0 20 16">
              <path d="M12 0v4C5 4 1 8 0 16c3-4 6-6 12-6v5l8-8z" fill="#fff" />
            </svg>
          </QuickButton>
          <QuickButton aria-label="Настроить панель" $width={7}>
            <svg width="7" height="8" viewBox="0 0 7 8">
              <path d="M0 0h7v2H0zM0 4h7L3.500 8z" fill="#fff" />
            </svg>
          </QuickButton>
        </QuickAccess>
        <Title>BIM WIZARD - ...s\swadm\Desktop\Коттедж.swb</Title>
        <WindowButtons>
          <WindowButton aria-label="Свернуть окно">
            <svg width="10" height="12" viewBox="0 0 10 12">
              <path d="M1 8h8v3H1z" fill="#fff" />
            </svg>
          </WindowButton>
          <WindowButton aria-label="Восстановить">
            <svg width="10" height="11" viewBox="0 0 10 11">
              <path d="M3 3V1h6v5H7M1 5h6v5H1z" fill="none" stroke="#fff" strokeWidth="1.500" />
            </svg>
          </WindowButton>
          <WindowButton aria-label="Закрыть окно">
            <svg width="10" height="10" viewBox="0 0 10 10">
              <path d="M1 .5l8 9M9 .5l-8 9" stroke="#fff" strokeWidth="1.500" />
            </svg>
          </WindowButton>
        </WindowButtons>
      </TitleBar>

      <Ribbon>
        <RibbonGroup $width={638}>
          <RibbonButtons $align="flex-end">
            <RibbonButton $width={72}>
              <FilterIcon />
              Отдельно
            </RibbonButton>
            <RibbonButton $width={92}>
              <GroupIcon />
              Группировать
            </RibbonButton>
          </RibbonButtons>
          <RibbonCaption />
        </RibbonGroup>
        <RibbonGroup $width={130}>
          <RibbonButtons $align="flex-start">
            <RibbonButton $width={64} $active>
              <GearsIcon />
              Свойства
            </RibbonButton>
            <RibbonButton>
              <BuildingIcon />
              3D
            </RibbonButton>
          </RibbonButtons>
          <RibbonCaption>Вид</RibbonCaption>
        </RibbonGroup>
        <RibbonGroup $width={129}>
          <RibbonButtons>
            <RibbonButton $width={90}>
              <FilterIcon />
              Применить
              <span>
                фильтр
                <svg width="8" height="6" viewBox="0 0 8 6">
                  <path d="M1 1l3 3 3-3" fill="none" stroke="#444" strokeWidth="1.500" />
                </svg>
              </span>
            </RibbonButton>
          </RibbonButtons>
          <RibbonCaption>Составной фильтр</RibbonCaption>
        </RibbonGroup>
        <RibbonGroup $width={98}>
          <RibbonButtons>
            <RibbonButton $width={84}>
              <AliasIcon />
              Псевдонимы
            </RibbonButton>
          </RibbonButtons>
          <RibbonCaption>Псевдонимы</RibbonCaption>
        </RibbonGroup>
        <RibbonGroup $width={112}>
          <RibbonButtons>
            <RibbonButton $width={98}>
              <WarningIcon />
              Некорректные
              <span>элементы</span>
            </RibbonButton>
          </RibbonButtons>
          <RibbonCaption>Проверка</RibbonCaption>
        </RibbonGroup>
      </Ribbon>

      <Workspace>
        <PropertiesPanel>
          <PropertiesScroll>
            <PropertiesTable>
              <caption>Свойства</caption>
              <tbody>
                {properties.map(([name, value], i) => (
                  <tr key={i}>
                    <th scope="row">{name}</th>
                    <td>{value}</td>
                  </tr>
                ))}
              </tbody>
            </PropertiesTable>
          </PropertiesScroll>
          <ScrollColumn>
            <ScrollButton aria-label="Вверх">
              <Arrow to="up" />
            </ScrollButton>
            <ScrollTrack $vertical>
              <ScrollThumb $size={83} />
            </ScrollTrack>
            <ScrollButton aria-label="Вниз">
              <Arrow to="down" />
            </ScrollButton>
          </ScrollColumn>
        </PropertiesPanel>

        <Documents>
          <TabStrip>
            <DocumentTab>
              C:\Users\swadm\Desktop\Коттедж.swb
              <button aria-label="Закрыть вкладку">
                <svg width="10" height="10" viewBox="0 0 10 10">
                  <path d="M1 1l8 8M9 1L1 9" stroke="#666" strokeWidth="1.500" />
                </svg>
              </button>
            </DocumentTab>
            <TabList aria-label="Список вкладок">
              <Arrow to="down" />
            </TabList>
          </TabStrip>
          <Panes>
            <Pane $grow={766}>
              <TreeGrid columns={projectColumns} nodes={projectTree} scroll={71} />
            </Pane>
            <Pane $grow={760}>
              <TreeGrid columns={estimateColumns} nodes={estimateTree} scroll={80} tall />
              <ScrollColumn>
                <ScrollButton aria-label="Вверх">
                  <Arrow to="up" />
                </ScrollButton>
                <ScrollTrack $vertical>
                  <ScrollThumb $size={89} />
                </ScrollTrack>
                <ScrollButton aria-label="Вниз">
                  <Arrow to="down" />
                </ScrollButton>
                <ScrollRow />
              </ScrollColumn>
            </Pane>
          </Panes>
        </Documents>
      </Workspace>

      <StatusBar>
        <button aria-label="По ширине">
          <FitIcon />
        </button>
      </StatusBar>

      <Menu />
    </Window>
  );
};

export default App;
